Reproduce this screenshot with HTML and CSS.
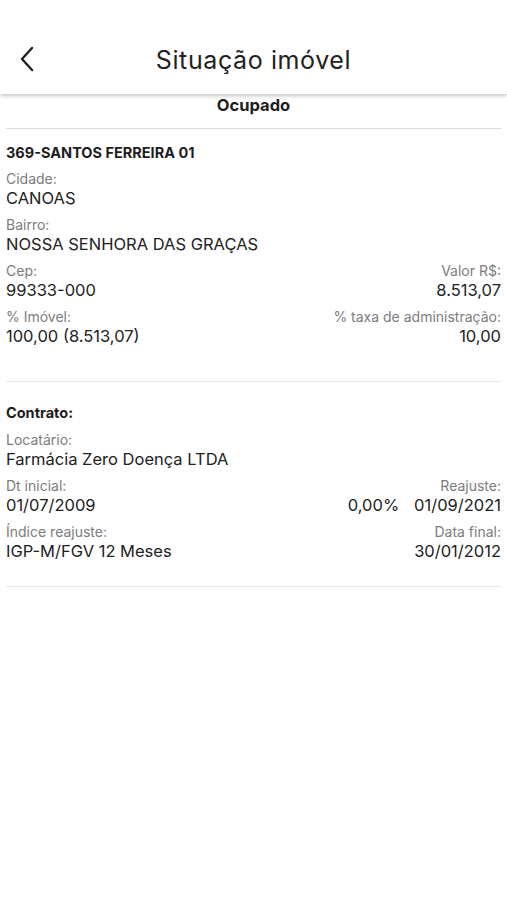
FILE: index.html
```html
<!DOCTYPE html>
<html lang="pt-BR">
<head>
<meta charset="utf-8">
<title>Situação imóvel</title>
<link rel="stylesheet" href="styles.css">
</head>
<body>
<header class="topbar">
  <button class="back" aria-label="Voltar">
    <svg width="16" height="26" viewBox="0 0 16 26"><path d="M13 2 L3 13 L13 24" fill="none" stroke="#1f1f1f" stroke-width="2.4" stroke-linecap="round" stroke-linejoin="round"/></svg>
  </button>
  <h1 class="title">Situação imóvel</h1>
</header>
<main class="content">
  <div class="status">Ocupado</div>
  <section class="section first">
    <h2 class="heading">369-SANTOS FERREIRA 01</h2>
    <div class="row">
      <div class="field"><div class="label">Cidade:</div><div class="value">CANOAS</div></div>
    </div>
    <div class="row">
      <div class="field"><div class="label">Bairro:</div><div class="value">NOSSA SENHORA DAS GRAÇAS</div></div>
    </div>
    <div class="row">
      <div class="field"><div class="label">Cep:</div><div class="value">99333-000</div></div>
      <div class="field right"><div class="label">Valor R$:</div><div class="value">8.513,07</div></div>
    </div>
    <div class="row">
      <div class="field"><div class="label">% Imóvel:</div><div class="value">100,00 (8.513,07)</div></div>
      <div class="field right"><div class="label">% taxa de administração:</div><div class="value">10,00</div></div>
    </div>
  </section>
  <section class="section second">
    <h2 class="heading">Contrato:</h2>
    <div class="row">
      <div class="field"><div class="label">Locatário:</div><div class="value">Farmácia Zero Doença LTDA</div></div>
    </div>
    <div class="row">
      <div class="field"><div class="label">Dt inicial:</div><div class="value">01/07/2009</div></div>
      <div class="field right"><div class="label">Reajuste:</div><div class="value"><span class="pct">0,00%</span>01/09/2021</div></div>
    </div>
    <div class="row">
      <div class="field"><div class="label">Índice reajuste:</div><div class="value">IGP-M/FGV 12 Meses</div></div>
      <div class="field right"><div class="label">Data final:</div><div class="value">30/01/2012</div></div>
    </div>
  </section>
</main>
</body>
</html>
```
FILE: styles.css
```css
* { box-sizing: border-box; }
html, body { margin: 0; padding: 0; background: #fff; }
body {
  font-family: Inter, "Noto Sans", "Liberation Sans", sans-serif;
  color: #222;
  width: 507px;
  min-height: 900px;
}
.topbar {
  position: relative;
  height: 94px;
  background: #fff;
  display: flex;
  align-items: flex-end;
  justify-content: center;
  padding-bottom: 20px;
  box-shadow: 0 2px 4px rgba(0,0,0,0.22);
  z-index: 1;
}
.back {
  position: absolute;
  left: 19px;
  top: 46px;
  border: 0;
  background: none;
  padding: 0;
  width: 16px;
  height: 26px;
}
.back svg { display: block; }
.title {
  margin: 0;
  font-size: 25px;
  font-weight: 400;
  color: #222;
  letter-spacing: 0.6px;
  line-height: 28px;
}
.content { padding: 0 6px; }
.status {
  text-align: center;
  font-weight: 700;
  font-size: 16.5px;
  line-height: 20px;
  padding-top: 1px;
  padding-bottom: 13px;
  border-bottom: 1px solid #dcdcdc;
  color: #1d1d1d;
}
.section {
  border-bottom: 1px solid #e8e8e8;
  padding: 15px 0 34px;
}
.section.second { padding-top: 22px; padding-bottom: 24px; }
.heading {
  margin: 0 0 8px;
  font-size: 14.5px;
  font-weight: 700;
  line-height: 18px;
  color: #1d1d1d;
}
.second .heading { margin-bottom: 9px; }
.row {
  display: flex;
  justify-content: space-between;
  margin-bottom: 7px;
}
.row:last-child { margin-bottom: 0; }
.field.right { text-align: right; }
.label {
  font-size: 14px;
  line-height: 18px;
  color: #7c7c7c;
}
.value {
  font-size: 16.5px;
  line-height: 21px;
  color: #222;
}
.pct { margin-right: 15px; }
```
